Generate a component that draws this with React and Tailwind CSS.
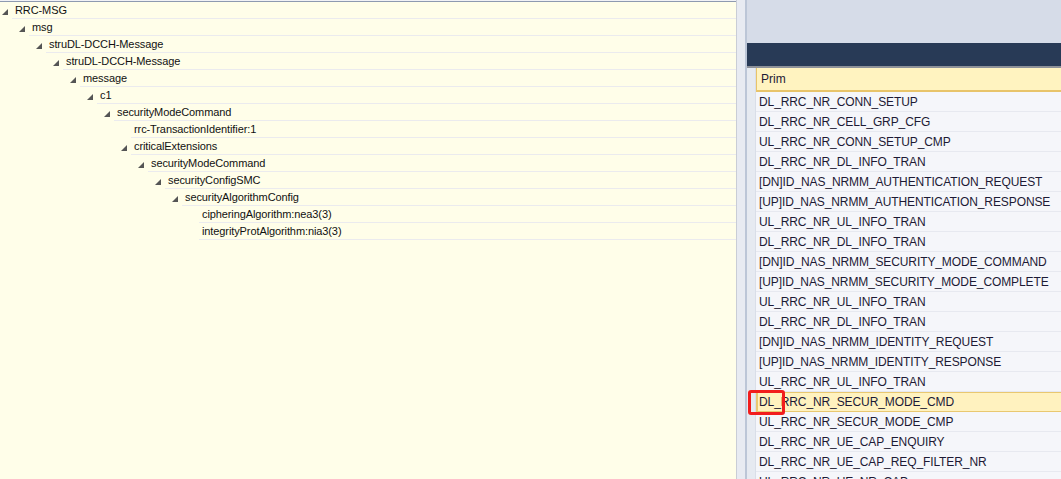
const TREE = [
  { level: 0, text: "RRC-MSG", open: true },
  { level: 1, text: "msg", open: true },
  { level: 2, text: "struDL-DCCH-Message", open: true },
  { level: 3, text: "struDL-DCCH-Message", open: true },
  { level: 4, text: "message", open: true },
  { level: 5, text: "c1", open: true },
  { level: 6, text: "securityModeCommand", open: true },
  { level: 7, text: "rrc-TransactionIdentifier:1" },
  { level: 7, text: "criticalExtensions", open: true },
  { level: 8, text: "securityModeCommand", open: true },
  { level: 9, text: "securityConfigSMC", open: true },
  { level: 10, text: "securityAlgorithmConfig", open: true },
  { level: 11, text: "cipheringAlgorithm:nea3(3)" },
  { level: 11, text: "integrityProtAlgorithm:nia3(3)" },
];

const PRIMS = [
  "DL_RRC_NR_CONN_SETUP",
  "DL_RRC_NR_CELL_GRP_CFG",
  "UL_RRC_NR_CONN_SETUP_CMP",
  "DL_RRC_NR_DL_INFO_TRAN",
  "[DN]ID_NAS_NRMM_AUTHENTICATION_REQUEST",
  "[UP]ID_NAS_NRMM_AUTHENTICATION_RESPONSE",
  "UL_RRC_NR_UL_INFO_TRAN",
  "DL_RRC_NR_DL_INFO_TRAN",
  "[DN]ID_NAS_NRMM_SECURITY_MODE_COMMAND",
  "[UP]ID_NAS_NRMM_SECURITY_MODE_COMPLETE",
  "UL_RRC_NR_UL_INFO_TRAN",
  "DL_RRC_NR_DL_INFO_TRAN",
  "[DN]ID_NAS_NRMM_IDENTITY_REQUEST",
  "[UP]ID_NAS_NRMM_IDENTITY_RESPONSE",
  "UL_RRC_NR_UL_INFO_TRAN",
  "DL_RRC_NR_SECUR_MODE_CMD",
  "UL_RRC_NR_SECUR_MODE_CMP",
  "DL_RRC_NR_UE_CAP_ENQUIRY",
  "DL_RRC_NR_UE_CAP_REQ_FILTER_NR",
  "UL_RRC_NR_UE_NR_CAP",
];

const SELECTED = 15;

const Expander = () => (
  <svg width="6" height="6" viewBox="0 0 6 6">
    <polygon points="6,0 6,6 0,6" fill="#555" />
  </svg>
);

const TreeRow = ({ level, text, open }) => (
  <div className="flex h-[17px]">
    <div
      className="flex shrink-0 items-center justify-end pr-[4px] pt-[2px]"
      style={{ width: 12 + 17 * level }}
    >
      {open && <Expander />}
    </div>
    <div className="flex flex-1 items-center border-b border-[#ebebee] pl-[3px] text-[11px] tracking-[-0.1px] text-[#111]">
      {text}
    </div>
  </div>
);

const App = () => {
  return (
    <div
      className="flex h-[479px] w-[1061px] overflow-hidden bg-white"
      style={{ fontFamily: '"Liberation Sans", Arial, sans-serif' }}
    >
      {/* tree panel */}
      <div className="flex w-[736px] shrink-0 flex-col bg-[#f1f2f6] pt-[1px]">
        <div className="flex-1 border-t border-[#8e9ab0] bg-[#fffee9]">
          {TREE.map((n, i) => (
            <TreeRow key={i} {...n} />
          ))}
        </div>
      </div>

      {/* splitter */}
      <div className="flex w-[11px] shrink-0">
        <div className="w-[1px] bg-[#c9cdd6]" />
        <div className="flex-1 bg-[#e8ebf2]" />
        <div className="w-[2px] bg-[#bcc6d7]" />
      </div>

      {/* prim list panel */}
      <div className="flex flex-1 flex-col bg-[#d6dce8]">
        <div className="h-[43px] shrink-0" />
        <div className="h-[23px] shrink-0 bg-[#283a56]" />
        <div className="h-[2px] shrink-0 bg-[#8d9199]" />
        <div className="flex flex-1 bg-[#f5f6fa]">
          <div className="w-[9px] shrink-0 border-r border-[#d9dee8] bg-[#e6eaf1]" />
          <div className="flex-1">
            <div className="flex h-[24px] items-center border-b-2 border-l border-[#e8c46a] bg-[#fff3c0] pl-[4px] text-[12px] text-[#1d1a35]">
              Prim
            </div>
            {PRIMS.map((p, i) =>
              i === SELECTED ? (
                <div
                  key={i}
                  className="relative flex h-[20px] items-center border-y border-l-2 border-[#e9c870] bg-[#fff2bf] pl-[1px] text-[12px] tracking-[-0.1px] text-[#1d1a35]"
                >
                  {p}
                  <div className="absolute left-[-10px] top-[-3px] h-[25px] w-[37px] rounded-[3px] border-[3px] border-[#f21d1d]" />
                </div>
              ) : (
                <div
                  key={i}
                  className="flex h-[20px] items-center border-b border-[#e7e9f0] pl-[3px] text-[12px] tracking-[-0.1px] text-[#1d1a35]"
                >
                  {p}
                </div>
              )
            )}
          </div>
        </div>
      </div>
    </div>
  );
};

export default App;
